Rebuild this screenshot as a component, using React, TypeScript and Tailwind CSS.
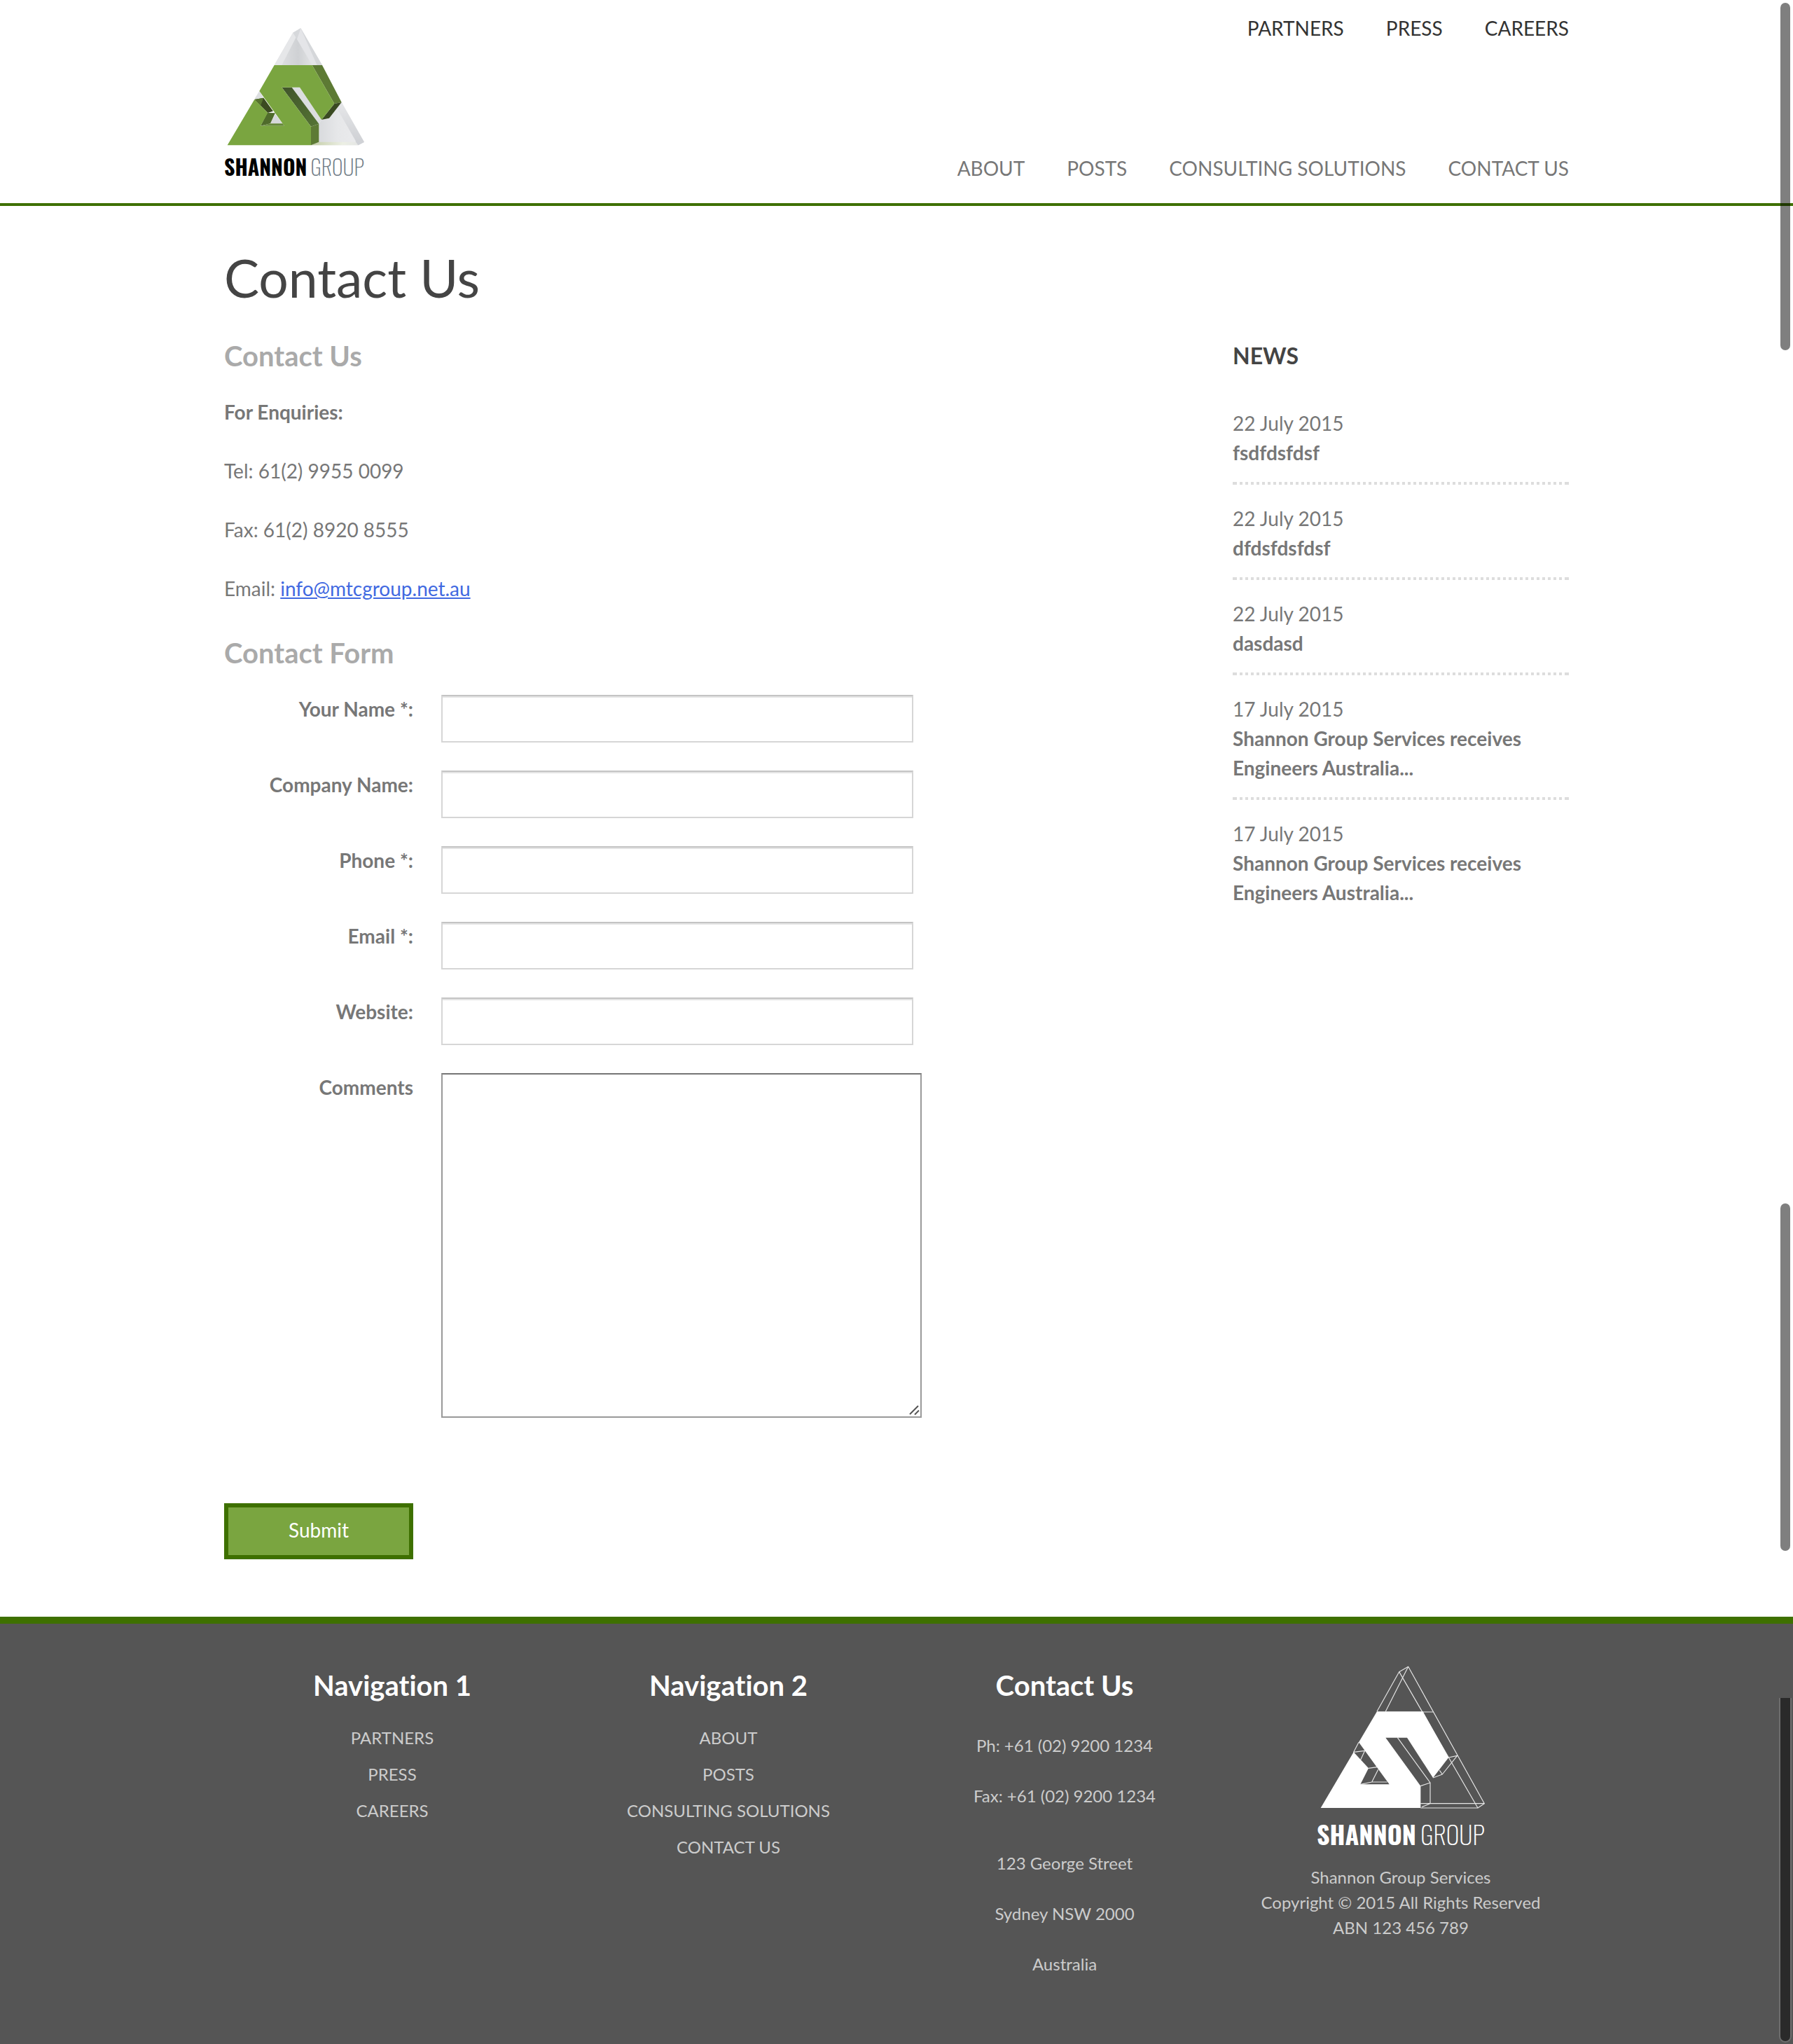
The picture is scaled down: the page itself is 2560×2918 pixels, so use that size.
import React from "react";

const topLinks = ["PARTNERS", "PRESS", "CAREERS"];
const mainLinks = ["ABOUT", "POSTS", "CONSULTING SOLUTIONS", "CONTACT US"];

const fields = [
  { id: "name", label: "Your Name *:", type: "text" },
  { id: "company", label: "Company Name:", type: "text" },
  { id: "phone", label: "Phone *:", type: "tel" },
  { id: "email", label: "Email *:", type: "email" },
  { id: "website", label: "Website:", type: "url" },
];

const news = [
  { date: "22 July 2015", title: "fsdfdsfdsf" },
  { date: "22 July 2015", title: "dfdsfdsfdsf" },
  { date: "22 July 2015", title: "dasdasd" },
  { date: "17 July 2015", title: "Shannon Group Services receives Engineers Australia..." },
  { date: "17 July 2015", title: "Shannon Group Services receives Engineers Australia..." },
];

function HeaderLogo() {
  return (
    <a href="#" aria-label="Shannon Group" className="block">
      <svg viewBox="60 60 600 510" className="block h-[170px] w-[200px]" aria-hidden="true">
        <defs>
          <linearGradient id="glassTop" x1="0" x2="1" y1="0" y2="0">
            <stop offset="0" stopColor="#e3e4e6" />
            <stop offset="0.5" stopColor="#cfd1d4" />
            <stop offset="1" stopColor="#eeeff0" />
          </linearGradient>
          <linearGradient id="glassRight" x1="0" x2="1" y1="0" y2="0">
            <stop offset="0" stopColor="#d3d5d8" />
            <stop offset="0.5" stopColor="#e6e7e9" />
            <stop offset="1" stopColor="#ececee" />
          </linearGradient>
          <linearGradient id="edge" x1="0" x2="0" y1="0" y2="1">
            <stop offset="0" stopColor="#e6e7e9" />
            <stop offset="1" stopColor="#cdcfd3" />
          </linearGradient>
          <linearGradient id="floor" x1="0" x2="1" y1="0" y2="0">
            <stop offset="0" stopColor="#c3cda6" />
            <stop offset="0.6" stopColor="#ecefe4" />
            <stop offset="1" stopColor="#e2e3e6" />
          </linearGradient>
          <linearGradient id="inner" x1="0" x2="1" y1="0" y2="1">
            <stop offset="0" stopColor="#40542a" />
            <stop offset="1" stopColor="#557434" />
          </linearGradient>
        </defs>
        <polygon points="275,219 355,80 388,61 480,219" fill="url(#glassTop)" />
        <polygon points="275,219 355,80 388,61 307,219" fill="#e6e7e9" />
        <polygon points="355,80 388,61 372,108" fill="#d6d8db" />
        <polygon points="388,61 480,219 437,219 372,108" fill="#e4e5e8" />
        <polygon points="388,61 480,219 458,219" fill="#d5d7da" />
        <polygon points="350,314 384,314 477,453 466,470" fill="#dcdee0" />
        <polygon points="466,470 477,453 510,446 563,378 660,548 634,562 432,562 466,548" fill="url(#glassRight)" />
        <polygon points="563,378 660,548 634,562 540,398" fill="url(#edge)" />
        <polygon points="432,562 466,548 660,548 634,562" fill="url(#floor)" />
        <polygon points="634,562 660,548 622,545" fill="#cfd1d6" />
        <polygon points="211,330 190,364 229,359" fill="#dddfe1" />
        <polygon points="279,428 310,469 258,469" fill="#d6d8da" />
        <polygon points="190,366 229,359 270,416 247,423" fill="#3b4a20" />
        <polygon points="190,366 229,359 216,393" fill="#56722e" />
        <polygon points="245,423 279,424 258,469 216,479" fill="#4f6b2b" />
        <polygon points="216,479 258,469 311,469 318,479" fill="#66883a" />
        <polygon points="437,219 480,219 563,378 532,384" fill="#5d7a34" />
        <polygon points="532,384 563,378 510,446 477,453" fill="#3a4a22" />
        <polygon points="307,314 350,314 466,470 432,482" fill="url(#inner)" />
        <polygon points="432,482 466,470 466,548 432,562" fill="#5d7a34" />
        <polygon
          points="211,330 275,219 437,219 532,384 477,453 384,314 307,314 432,482 432,562 74,562 190,366 247,423 216,479 318,479"
          fill="#7aa540"
        />
      </svg>
      <span className="mt-[10px] flex h-9 w-[200px] items-center justify-between font-['Oswald','Open_Sans_Condensed','Roboto',sans-serif] text-[30px]">
        <span className="font-bold text-black">SHANNON</span>
        <span className="font-extralight text-[#6f7b85]">GROUP</span>
      </span>
    </a>
  );
}

function FooterLogo() {
  return (
    <a href="#" aria-label="Shannon Group" className="block">
      <svg viewBox="60 52 720 612" className="block h-[204px] w-[240px]" aria-hidden="true">
        <g fill="none" stroke="#e6e6e6" strokeWidth="3.5" strokeLinejoin="round">
          <path d="M318 248 413 78 452 56 778 642 750 661H505" />
          <path d="M413 78 750 661M452 56 355 248M515 250H560" />
          <path d="M625 445 662 437 598 517 558 532M586 500 598 517" />
          <path d="M406 360 546 553V642L510 657M505 567 546 553M505 642H778" />
          <path d="M240 380 218 422 266 416 248 455M282 491 318 486M323 497 296 550 247 560M296 550H362" />
        </g>
        <polygon
          points="240,380 318,248 515,248 625,445 558,532 447,360 355,360 505,567 505,661 77,661 218,422 282,491 247,560 371,560"
          fill="#ffffff"
        />
      </svg>
      <span className="mt-[14px] flex h-11 w-[240px] items-center justify-between font-['Oswald','Open_Sans_Condensed','Roboto',sans-serif] text-[36px] text-white">
        <span className="font-bold">SHANNON</span>
        <span className="font-extralight">GROUP</span>
      </span>
    </a>
  );
}

function NavRow({ links, label, tone }: { links: string[]; label: string; tone: string }) {
  return (
    <nav aria-label={label}>
      <ul className={`flex justify-end gap-[60px] leading-10 ${tone}`}>
        {links.map((l) => (
          <li key={l}>
            <a href="#">{l}</a>
          </li>
        ))}
      </ul>
    </nav>
  );
}

function FooterNav({ title, links }: { title: string; links: string[] }) {
  return (
    <nav aria-label={title}>
      <h2 className="text-[40px] leading-[56px] font-bold text-white">{title}</h2>
      <ul className="mt-[21px] leading-[52px]">
        {links.map((l) => (
          <li key={l}>
            <a href="#">{l}</a>
          </li>
        ))}
      </ul>
    </nav>
  );
}

export default function App() {
  return (
    <div className="relative bg-white font-['Lato',sans-serif] text-[28px] leading-[42px] text-[#777777] [font-variant-ligatures:none]">
      <header className="border-b-4 border-[#3e7000]">
        <div className="mx-auto flex w-3/4 justify-between">
          <div className="pt-10 pb-[34px]">
            <HeaderLogo />
          </div>
          <div className="flex flex-col justify-between pt-5 pb-[30px]">
            <NavRow links={topLinks} label="Top" tone="text-[#333333]" />
            <NavRow links={mainLinks} label="Main" tone="text-[#777777]" />
          </div>
        </div>
      </header>

      <main className="mx-auto w-3/4 pt-[62px] pb-[82px]">
        <h1 className="text-[75px] leading-[80px] text-[#444444]">Contact Us</h1>
        <div className="mt-11 grid grid-cols-4">
          <div className="col-span-3">
            <h2 className="text-[40px] leading-[56px] font-bold text-[#aaaaaa]">Contact Us</h2>
            <div className="mt-[31px] flex flex-col gap-[42px]">
              <p className="font-bold">For Enquiries:</p>
              <p>Tel: 61(2) 9955 0099</p>
              <p>Fax: 61(2) 8920 8555</p>
              <p>
                Email:{" "}
                <a href="mailto:info@mtcgroup.net.au" className="text-[#4169e1] underline">
                  info@mtcgroup.net.au
                </a>
              </p>
            </div>
            <h2 className="mt-[43px] text-[40px] leading-[56px] font-bold text-[#aaaaaa]">Contact Form</h2>
            <form className="mt-8" onSubmit={(e) => e.preventDefault()}>
              <div className="flex flex-col gap-10">
                {fields.map((f) => (
                  <div key={f.id} className="flex gap-10">
                    <label htmlFor={f.id} className="w-[270px] text-right leading-10 font-bold">
                      {f.label}
                    </label>
                    <input
                      id={f.id}
                      name={f.id}
                      type={f.type}
                      className="h-[68px] w-[674px] border-2 border-[#d6d6d6] border-t-[#c4c4c4] bg-white px-3 shadow-[inset_0_2px_0_#e4e4e4] outline-none"
                    />
                  </div>
                ))}
                <div className="flex gap-10">
                  <label htmlFor="comments" className="w-[270px] text-right leading-10 font-bold">
                    Comments
                  </label>
                  <div className="relative">
                    <textarea
                      id="comments"
                      name="comments"
                      className="block h-[492px] w-[686px] resize-none border-2 border-[#999999] border-t-[#757575] bg-white p-3 outline-none"
                    />
                    <svg viewBox="0 0 20 20" className="absolute right-0 bottom-0 size-5" aria-hidden="true">
                      <path d="M3 15 15 3M10 15.500 16 9.500" stroke="#555555" strokeWidth="2" />
                    </svg>
                  </div>
                </div>
              </div>
              <button
                type="submit"
                className="mt-[122px] h-20 w-[270px] border-6 border-[#3e7000] bg-[#7aa540] pb-1 text-white"
              >
                Submit
              </button>
            </form>
          </div>

          <aside>
            <h2 className="text-[32px] leading-[56px] font-bold text-[#444444]">NEWS</h2>
            <ul className="mt-5">
              {news.map((n, i) => (
                <li key={i} className="group pt-[27px]">
                  <p>{n.date}</p>
                  <a href="#" className="block font-bold">
                    {n.title}
                  </a>
                  <div className="mt-[21px] h-1 border-x-6 border-[#dddddd] bg-[repeating-linear-gradient(to_right,transparent_0,transparent_4px,#dddddd_4px,#dddddd_8px)] group-last:hidden" />
                </li>
              ))}
            </ul>
          </aside>
        </div>
      </main>

      <footer className="border-t-10 border-[#3e7000] bg-[#555555] text-[24px] leading-9 text-[#cccccc]">
        <div className="mx-auto grid w-3/4 grid-cols-4 pt-[60px] pb-24 text-center">
          <FooterNav title="Navigation 1" links={topLinks} />
          <FooterNav title="Navigation 2" links={mainLinks} />
          <section>
            <h2 className="text-[40px] leading-[56px] font-bold text-white">Contact Us</h2>
            <div className="mt-10 flex flex-col gap-9">
              <p>Ph: +61 (02) 9200 1234</p>
              <p>Fax: +61 (02) 9200 1234</p>
            </div>
            <address className="mt-[60px] flex flex-col gap-9 not-italic">
              <span>123 George Street</span>
              <span>Sydney NSW 2000</span>
              <span>Australia</span>
            </address>
          </section>
          <section className="flex flex-col items-center">
            <FooterLogo />
            <p className="mt-[22px]">
              Shannon Group Services
              <br />
              Copyright © 2015 All Rights Reserved
              <br />
              ABN 123 456 789
            </p>
          </section>
        </div>
      </footer>

      <div aria-hidden="true" className="absolute top-1 right-1 h-[496px] w-[14px] rounded-full bg-black/50" />
      <div aria-hidden="true" className="absolute top-[1718px] right-1 h-[496px] w-[14px] rounded-full bg-black/50" />
      <div
        aria-hidden="true"
        className="absolute right-0.5 bottom-0.5 h-[492px] w-[18px] rounded-b-full border-2 border-t-0 border-[#6e6e6e] bg-[#2a2a2a]"
      />
    </div>
  );
}
